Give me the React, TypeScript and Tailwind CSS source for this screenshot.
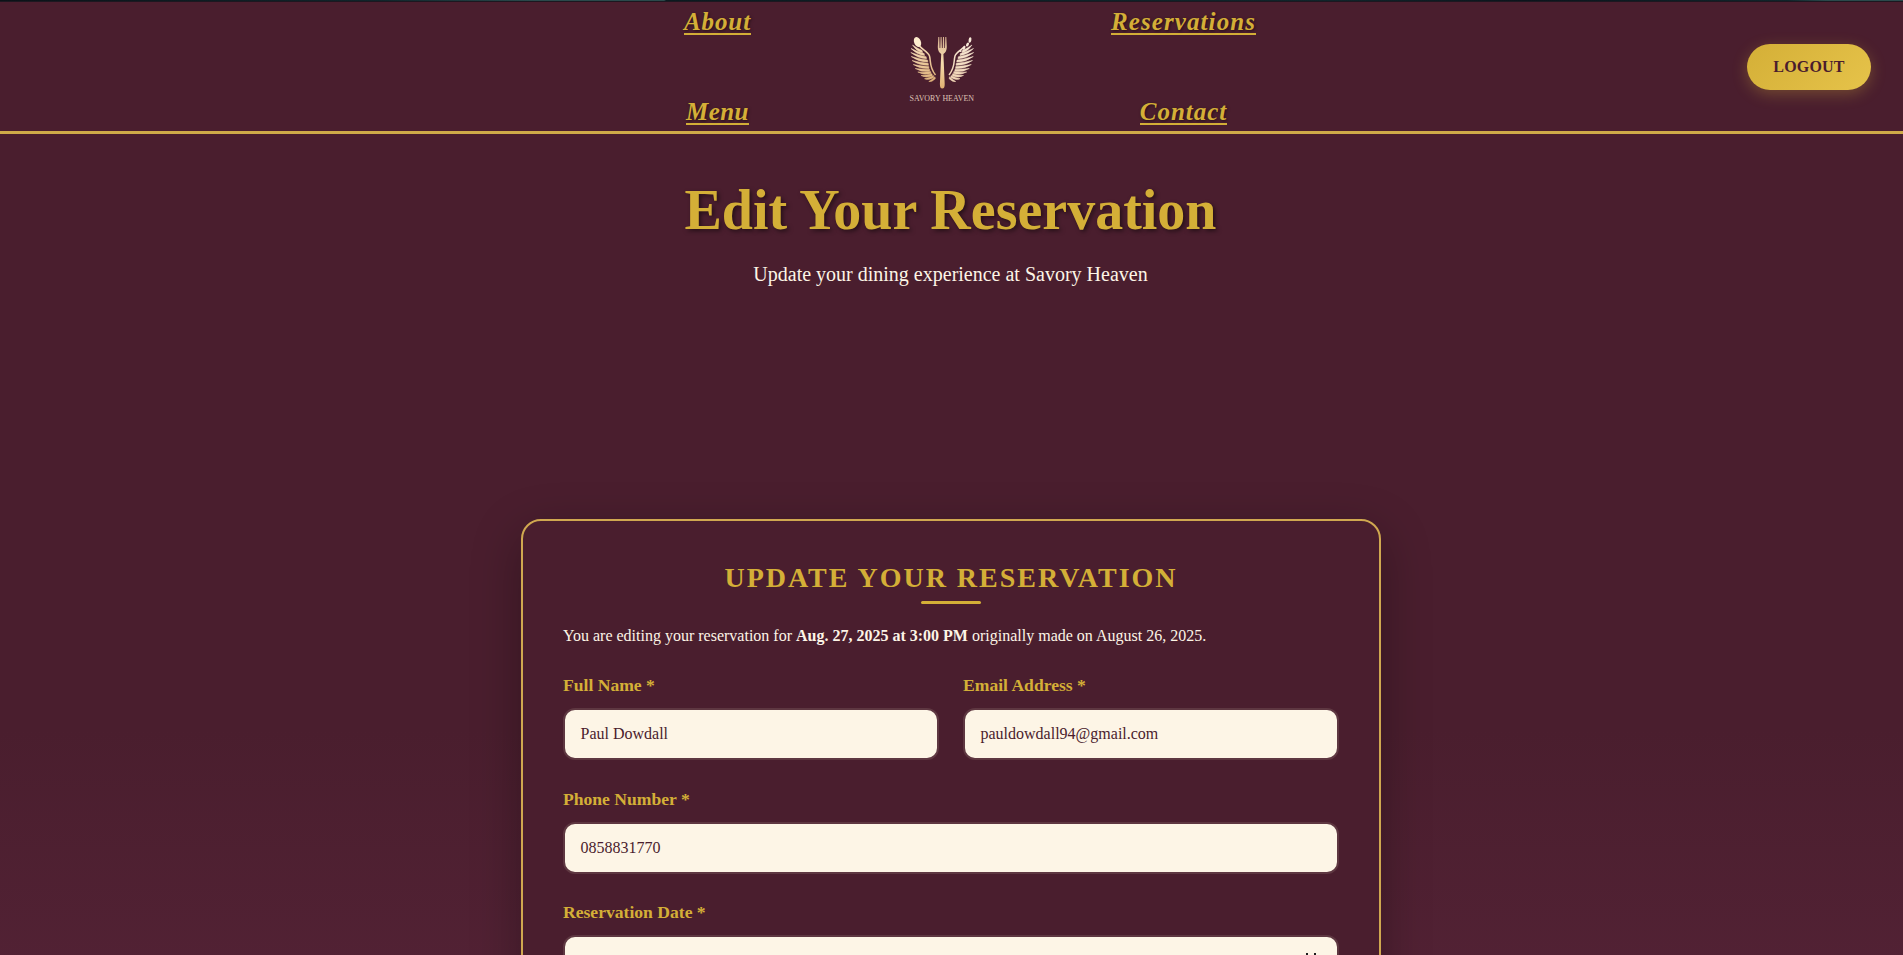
import React from "react";

const navLink =
  "block font-bold italic whitespace-nowrap border-b-2 border-[#d4af37] text-[#d4af37] text-[25px] leading-[22px] [text-shadow:1px_1px_3px_rgba(0,0,0,0.5)]";

// Feather tip (x, y) and root (x, y), from the top of the wing to the bottom.
const feathers = [
  [2.5, 10, 12.5, 17],
  [1, 13.5, 14.5, 20],
  [0.8, 17.5, 16.5, 23.2],
  [1.2, 21.5, 17.8, 26.5],
  [2, 25.5, 18.5, 29.7],
  [3.2, 29.5, 19, 32.8],
  [5.2, 33.5, 19.8, 35.6],
  [7.8, 37, 21, 38],
  [11, 40.5, 22.3, 40.2],
  [14.5, 43.7, 23.8, 42],
  [18.8, 46.5, 25.3, 43.2],
];

function featherPath([tx, ty, rx, ry]: number[]) {
  const mx = (tx + rx) / 2;
  const my = (ty + ry) / 2;
  return `M${tx} ${ty}Q${mx - 1} ${my + 3} ${rx} ${ry + 0.6}L${rx - 0.3} ${ry - 1.4}Q${mx} ${my} ${tx} ${ty}Z`;
}

function Wing({ fill }: { fill: string }) {
  return (
    <g>
      <path
        d="M9.500 11C12 14.500 18 16.500 19.500 21C21 26 19 32 25.500 40"
        fill="none"
        stroke={fill}
        strokeWidth="1.500"
      />
      {feathers.map((f, i) => (
        <path key={i} d={featherPath(f)} fill={fill} stroke={fill} strokeWidth="0.500" />
      ))}
    </g>
  );
}

function Logo() {
  return (
    <svg width="66" height="68" viewBox="0 0 66 68" className="block overflow-visible">
      <defs>
        <linearGradient id="wingGold" gradientUnits="userSpaceOnUse" x1="4" y1="4" x2="20" y2="46">
          <stop offset="0" stopColor="#fbe6c6" />
          <stop offset="1" stopColor="#dfb27a" />
        </linearGradient>
        <linearGradient id="wingLight" gradientUnits="userSpaceOnUse" x1="4" y1="4" x2="20" y2="46">
          <stop offset="0" stopColor="#f8ead8" />
          <stop offset="1" stopColor="#f0d4b4" />
        </linearGradient>
        <linearGradient id="forkGold" x1="0" y1="0" x2="0" y2="1">
          <stop offset="0" stopColor="#d9b492" />
          <stop offset="0.500" stopColor="#f6dcae" />
          <stop offset="1" stopColor="#e0b071" />
        </linearGradient>
      </defs>
      <Wing fill="url(#wingGold)" />
      <g transform="translate(64.500 0) scale(-1 1)">
        <Wing fill="url(#wingLight)" />
        <ellipse cx="4.500" cy="5" rx="1.400" ry="2.700" transform="rotate(-10 4.500 5)" fill="#f8ead8" />
        <ellipse cx="7" cy="9.500" rx="1.300" ry="2.200" transform="rotate(-25 7 9.500)" fill="#f8ead8" />
        <ellipse cx="10.500" cy="13" rx="1.200" ry="1.900" transform="rotate(-30 10.500 13)" fill="#f8ead8" />
        <circle cx="14" cy="16" r="1.100" fill="#f8ead8" />
      </g>
      <ellipse cx="7.500" cy="7" rx="3.400" ry="5.200" transform="rotate(-22 7.500 7)" fill="#fdeccd" />
      <path
        d="M28.300 2L27.800 12Q27.800 17 31.200 19L29.900 49Q29.800 53.500 32.300 53.500Q34.800 53.500 34.700 49L33.400 19Q36.800 17 36.800 12L36.300 2H35.300L35 13H34.300L34 2H33L32.700 13H31.900L31.600 2H30.600L30.300 13H29.600L29.300 2Z"
        fill="url(#forkGold)"
      />
      <text
        x="-0.500"
        y="65.500"
        textLength="64.500"
        lengthAdjust="spacingAndGlyphs"
        fontSize="8.500"
        fill="#dcc0b4"
        fontFamily="Liberation Serif, serif"
      >
        SAVORY HEAVEN
      </text>
    </svg>
  );
}

function Field({ label, value, date }: { label: string; value?: string; date?: boolean }) {
  return (
    <label className="block flex-1">
      <span className="block h-[21px] text-[17.600px] leading-[21px] font-bold text-[#d4af37]">{label}</span>
      <span className="mt-[12px] flex h-[52px] items-center justify-between rounded-[12px] border-2 border-[#5e3741] bg-[#fdf5e6] pr-[19px] pl-[15.500px] text-[16px] text-[#4a1c2d]">
        <span>{value}</span>
        {date && (
          <svg width="14" height="16" viewBox="0 0 14 16" fill="none" stroke="#1c1c1c" strokeWidth="2">
            <path d="M1 3H13V15H1ZM3 0V3M11 0V3M1 6H13" />
          </svg>
        )}
      </span>
    </label>
  );
}

export default function App() {
  return (
    <div className="flex h-[955px] w-full flex-col overflow-hidden bg-[linear-gradient(to_bottom,#4a1e2e_0px,#4a1e2e_730px,#532235_1000px)] font-['Liberation_Serif','Times_New_Roman',serif]">
      <div className="h-px shrink-0 bg-[linear-gradient(to_right,#0b1218_0%,#10252b_20%,#2a4a4c_28%,#2a4a4c_34.900%,#0b1a20_35%,#10252b_70%,#0b141c_80%,#10252b_94%,#2a4a4c_96%)]" />
      <div className="h-px shrink-0 bg-[#1d1720]" />
      <header className="flex h-[132px] shrink-0 items-start border-b-[3px] border-[#cfaa48] bg-[#4a1e2e]">
        <nav className="ml-[684px] flex h-[123px] w-[72px] flex-col items-start justify-between pt-[9px]">
          <a className={`${navLink} tracking-[0.900px]`}>About</a>
          <a className={`${navLink} ml-[2px] tracking-[0.400px]`}>Menu</a>
        </nav>
        <div className="mt-[33px] ml-[154px] w-[66px]">
          <Logo />
        </div>
        <nav className="ml-[121px] flex h-[123px] w-[173px] flex-col items-center justify-between pt-[9px]">
          <a className={`${navLink} tracking-[1.100px]`}>Reservations</a>
          <a className={`${navLink} tracking-[1px]`}>Contact</a>
        </nav>
        <button className="mt-[42px] mr-[32px] ml-auto h-[46px] w-[124px] rounded-full bg-[linear-gradient(135deg,#d4af37,#e6c34a)] text-[16px] font-bold tracking-[0.200px] text-[#4a1c2d] shadow-[0_4px_15px_rgba(212,175,55,0.3)]">
          LOGOUT
        </button>
      </header>
      <section className="mr-[2px] h-[385px] shrink-0 text-center">
        <h1 className="mt-[43px] text-[56px] leading-[67px] font-bold text-[#d4af37] [text-shadow:2px_2px_4px_rgba(0,0,0,0.5)]">
          Edit Your Reservation
        </h1>
        <p className="mt-[12px] text-[20px] leading-[36px] text-[#fdf5e6]">
          Update your dining experience at Savory Heaven
        </p>
      </section>
      <main className="ml-[521px] h-[700px] w-[860px] shrink-0 rounded-[20px] border-2 border-[#d0a850] bg-[#4a1e2e] px-[40px] pt-[39px] shadow-[0_15px_50px_rgba(0,0,0,0.3)]">
        <h2 className="text-center text-[28px] leading-[36px] font-bold tracking-[2px] text-[#d4af37]">
          UPDATE YOUR RESERVATION
        </h2>
        <div className="mx-auto mt-[5px] h-[3px] w-[60px] rounded-[2px] bg-[#d4af37]" />
        <p className="mt-[20px] text-[16px] leading-[24px] text-[#fdf5e6]">
          You are editing your reservation for <strong>Aug. 27, 2025 at 3:00 PM</strong> originally made on August 26, 2025.
        </p>
        <form className="mt-[27px] flex flex-col gap-[28.600px]">
          <div className="flex gap-[24px]">
            <Field label="Full Name *" value="Paul Dowdall" />
            <Field label="Email Address *" value="pauldowdall94@gmail.com" />
          </div>
          <Field label="Phone Number *" value="0858831770" />
          <Field label="Reservation Date *" date />
        </form>
      </main>
    </div>
  );
}
